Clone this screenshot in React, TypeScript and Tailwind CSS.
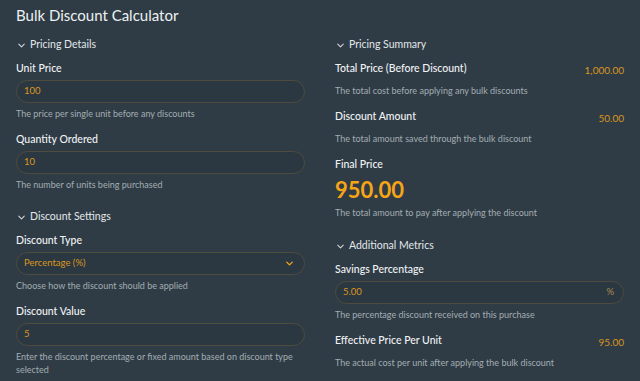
import { ChevronDown } from "lucide-react";

const font = { fontFamily: "Lato, 'Noto Sans', sans-serif" };

const SectionHeader = ({ title, className = "" }: { title: string; className?: string }) => (
  <div className={`flex items-center gap-[3px] h-5 text-[10.5px] text-[#e3e7ea] ${className}`}>
    <ChevronDown size={11} strokeWidth={2.2} className="text-[#d6dbde]" />
    <span>{title}</span>
  </div>
);

const Label = ({ children }: { children: React.ReactNode }) => (
  <p className="text-[10.5px] leading-[18px] font-medium text-[#f1f3f5]">{children}</p>
);

const Help = ({ children, className = "mt-[4px]" }: { children: React.ReactNode; className?: string }) => (
  <p className={`${className} text-[9px] leading-[13px] text-[#a3adb3]`}>{children}</p>
);

const Field = ({
  label,
  value,
  help,
  suffix,
  select,
  className = "",
}: {
  label: string;
  value: string;
  help: string;
  suffix?: string;
  select?: boolean;
  className?: string;
}) => (
  <div className={className}>
    <Label>{label}</Label>
    <div className="mt-[3px] h-[23px] rounded-full border border-[#4d4c3e] bg-[#2c3841] flex items-center justify-between pl-[7px] pr-[9px]">
      <span className="text-[9.5px] text-[#d9961f]">{value}</span>
      {suffix && <span className="text-[9.5px] text-[#a88a55]">{suffix}</span>}
      {select && <ChevronDown size={11} strokeWidth={3} className="text-[#f0a419]" />}
    </div>
    <Help>{help}</Help>
  </div>
);

const ValueRow = ({
  label,
  value,
  help,
  className = "",
}: {
  label: string;
  value: string;
  help: string;
  className?: string;
}) => (
  <div className={className}>
    <div className="flex items-end justify-between">
      <Label>{label}</Label>
      <span className="text-[10px] leading-[13px] text-[#d9961f]">{value}</span>
    </div>
    <Help className="mt-[7px]">{help}</Help>
  </div>
);

export default function App() {
  return (
    <div style={font} className="w-[640px] h-[381px] overflow-hidden bg-[#2f3c45] px-4 pt-px">
      <h1 className="text-[15px] leading-7 text-[#eef1f3]">Bulk Discount Calculator</h1>
      <div className="grid grid-cols-2 gap-[30px] mt-[6px]">
        {/* left column */}
        <div>
          <SectionHeader title="Pricing Details" />
          <Field
            className="mt-[4px]"
            label="Unit Price"
            value="100"
            help="The price per single unit before any discounts"
          />
          <Field
            className="mt-[10px]"
            label="Quantity Ordered"
            value="10"
            help="The number of units being purchased"
          />
          <SectionHeader title="Discount Settings" className="mt-[16px]" />
          <Field
            className="mt-[4px]"
            label="Discount Type"
            value="Percentage (%)"
            select
            help="Choose how the discount should be applied"
          />
          <Field
            className="mt-[10px]"
            label="Discount Value"
            value="5"
            help="Enter the discount percentage or fixed amount based on discount type selected"
          />
        </div>

        {/* right column */}
        <div>
          <SectionHeader title="Pricing Summary" />
          <ValueRow
            className="mt-[4px]"
            label="Total Price (Before Discount)"
            value="1,000.00"
            help="The total cost before applying any bulk discounts"
          />
          <ValueRow
            className="mt-[10px]"
            label="Discount Amount"
            value="50.00"
            help="The total amount saved through the bulk discount"
          />
          <div className="mt-[10px]">
            <Label>Final Price</Label>
            <p className="mt-[3px] text-[22px] leading-[28px] font-bold text-[#f5a516]">950.00</p>
            <Help className="mt-[2px]">The total amount to pay after applying the discount</Help>
          </div>
          <SectionHeader title="Additional Metrics" className="mt-[17px]" />
          <Field
            className="mt-[4px]"
            label="Savings Percentage"
            value="5.00"
            suffix="%"
            help="The percentage discount received on this purchase"
          />
          <ValueRow
            className="mt-[10px]"
            label="Effective Price Per Unit"
            value="95.00"
            help="The actual cost per unit after applying the bulk discount"
          />
        </div>
      </div>
    </div>
  );
}
